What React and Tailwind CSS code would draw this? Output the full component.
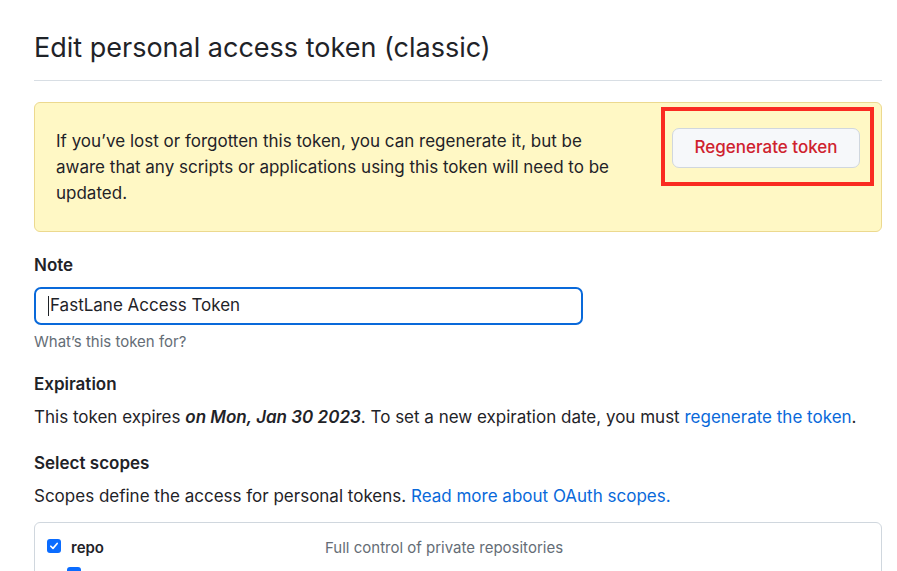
import React from "react";

const EditToken = () => {
  return (
    <div className="min-h-screen bg-white font-['Inter','Liberation_Sans',sans-serif] text-[#1f2328]">
      <div className="ml-[34px] w-[848px] pt-[30px]">
        <div className="border-b border-[#d8dee4] pb-[14px]">
          <h1 className="text-[27px] leading-[36px] font-normal">
            Edit personal access token (classic)
          </h1>
        </div>

        <div className="mt-[21px] flex justify-between rounded-[6px] border border-[#ecd98f] bg-[#fff8c5] px-[21px] py-[25px]">
          <p className="w-[560px] text-[17px] leading-[26px]">
            If you’ve lost or forgotten this token, you can regenerate it, but be aware that any
            scripts or applications using this token will need to be updated.
          </p>
          <div className="relative h-[40px]">
            <button className="h-[40px] w-[188px] rounded-[7px] border border-[#d0d7de] bg-[#f6f8fa] text-[17px] font-medium text-[#cf222e]">
              Regenerate token
            </button>
            <div className="absolute -left-[11px] -right-[14px] -top-[21px] -bottom-[18px] border-[4px] border-[#fa2b21]" />
          </div>
        </div>

        <div className="mt-[21px]">
          <label className="block text-[17px] leading-[24px] font-semibold">Note</label>
          <div className="mt-[10px] flex h-[38px] w-[549px] items-center rounded-[7px] border-2 border-[#0969da] px-[12px] text-[17px]">
            <span className="mr-[1px] h-[20px] w-[1px] bg-[#1f2328]" />
            FastLane Access Token
          </div>
          <p className="mt-[7px] text-[15px] leading-[20px] text-[#656d76]">What’s this token for?</p>
        </div>

        <div className="mt-[20px]">
          <h2 className="text-[17px] leading-[24px] font-semibold">Expiration</h2>
          <p className="mt-[9px] text-[17px] leading-[24px]">
            This token expires <em className="font-semibold">on Mon, Jan 30 2023</em>. To set a new
            expiration date, you must{" "}
            <a className="text-[#0969da]">regenerate the token</a>.
          </p>
        </div>

        <div className="mt-[22px]">
          <h2 className="text-[17px] leading-[24px] font-semibold">Select scopes</h2>
          <p className="mt-[9px] text-[17px] leading-[24px]">
            Scopes define the access for personal tokens.{" "}
            <a className="text-[#0969da]">Read more about OAuth scopes.</a>
          </p>
        </div>

        <div className="mt-[14px] h-[80px] rounded-[6px] border border-[#d0d7de] px-[12px] pt-[14px]">
          <div className="flex items-center">
            <span className="-mt-[5px] flex h-[14px] w-[14px] items-center justify-center rounded-[3px] bg-[#0a6cff]">
              <svg viewBox="0 0 12 12" className="h-[10px] w-[10px]">
                <path d="M2.2 6.3 L4.8 8.8 L9.8 3" fill="none" stroke="white" strokeWidth="2" strokeLinecap="round" strokeLinejoin="round" />
              </svg>
            </span>
            <span className="ml-[10px] w-[254px] text-[15px] font-semibold leading-[22px]">repo</span>
            <span className="text-[15px] leading-[22px] text-[#656d76]">Full control of private repositories</span>
          </div>
          <div className="ml-[20px] mt-[8px]">
            <span className="block h-[14px] w-[14px] rounded-[3px] bg-[#0a6cff]" />
          </div>
        </div>
      </div>
    </div>
  );
};

export default EditToken;
